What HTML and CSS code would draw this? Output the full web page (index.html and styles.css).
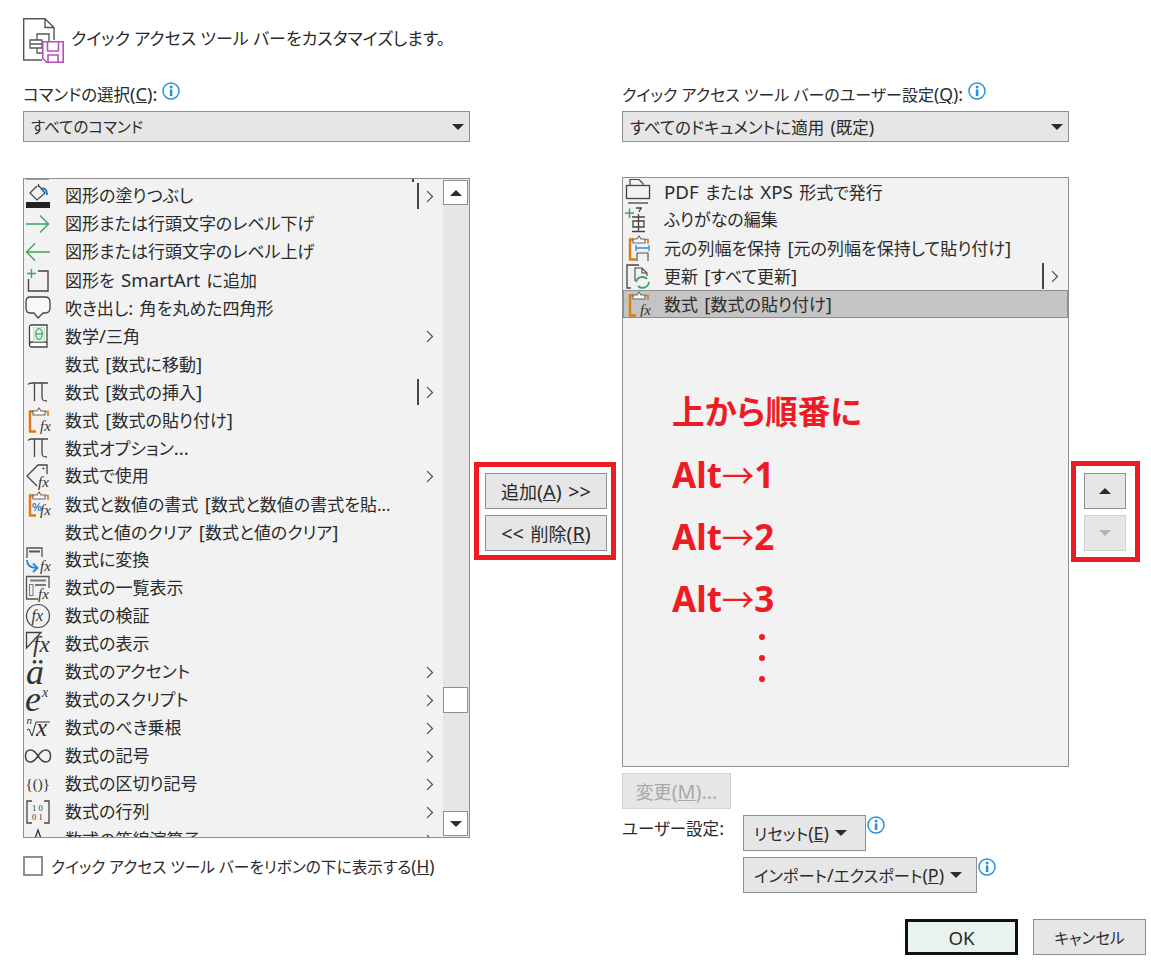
FILE: index.html
```html
<!DOCTYPE html>
<html lang="ja">
<head>
<meta charset="utf-8">
<title>クイック アクセス ツール バー</title>
<link rel="stylesheet" href="styles.css">
</head>
<body>
<svg class="defs" width="0" height="0" aria-hidden="true">
  <symbol id="pi" viewBox="0 0 28 28">
    <path d="M4 6.500C5 5 6 5 8 5H24M10.500 5V23M18 5V19C18 22 19 23 23 23" fill="none" stroke="#444" stroke-width="1.300"/>
  </symbol>
  <symbol id="info" viewBox="0 0 18 18">
    <circle cx="9" cy="9" r="8" fill="#fff" stroke="#2a92d8" stroke-width="1.500"/>
    <rect x="7.800" y="7.500" width="2.600" height="6.500" fill="#2a92d8"/>
    <circle cx="9.100" cy="5" r="1.500" fill="#2a92d8"/>
  </symbol>
  <symbol id="clip" viewBox="0 0 28 28">
    <path d="M10 5.500H6V25.500H12" fill="none" stroke="#dd7a14" stroke-width="2.400"/>
    <path d="M21 5.500H24V10" fill="none" stroke="#dd7a14" stroke-width="1.600"/>
    <path d="M9 9V5H13L15 2L17 5H21V9Z" fill="#f8f8f8" stroke="#666" stroke-width="1.100"/>
  </symbol>
</svg>

<div class="page">
  <header class="head">
    <svg class="head-icon" width="42" height="46" viewBox="0 0 42 46">
      <path d="M19 42H.7V.7H22L31 9.500V22M22 .7V9.500H31" fill="none" stroke="#555" stroke-width="1.400"/>
      <path d="M14 22V16H26V23M7 22H19V30H7ZM14 30V35H19M7 26H19" fill="none" stroke="#555" stroke-width="1.300"/>
      <path d="M19.800 23.800H40.200V44.200H23.500L19.800 40.500Z" fill="#fff" stroke="#b94db9" stroke-width="1.600"/>
      <path d="M24.500 24V33H35.500V24M25 44V37H35V44" fill="none" stroke="#b94db9" stroke-width="1.600"/>
    </svg>
    <h1 class="title">クイック アクセス ツール バーをカスタマイズします。</h1>
  </header>

  <main class="columns">
    <section class="col">
      <div class="label"><span>コマンドの選択<span class="lt">(<u>C</u>):</span></span><svg class="info"><use href="#info"/></svg></div>
      <div class="select select-left"><span>すべてのコマンド</span><i class="tri-down"></i></div>
      <div class="list list-left">
        <div class="rows">
          <div class="row-cut"><i class="cut-bar"></i><i class="sep"></i></div>
          <div class="row"><svg class="ic" viewBox="0 0 28 28"><rect x="2" y="20" width="24" height="6" fill="#222"/><path d="M14.500 2V5M13 4L6 11L13 18L21 11L15 4" fill="none" stroke="#444" stroke-width="1.200"/><path d="M18 6.500C21 6 23 8 23 13" fill="none" stroke="#1e78c8" stroke-width="2"/></svg><span class="t">図形の塗りつぶし</span><i class="sep"></i><i class="chev"></i></div>
          <div class="row"><svg class="ic" viewBox="0 0 28 28"><path d="M2 14H24M16 5.500L24.500 14L16 22.500" fill="none" stroke="#3fa35f" stroke-width="1.400"/></svg><span class="t">図形または行頭文字のレベル下げ</span></div>
          <div class="row"><svg class="ic" viewBox="0 0 28 28"><path d="M26 14H3M11 5.500L2.500 14L11 22.500" fill="none" stroke="#3fa35f" stroke-width="1.400"/></svg><span class="t">図形または行頭文字のレベル上げ</span></div>
          <div class="row"><svg class="ic" viewBox="0 0 28 28"><path d="M3 7.500H12M7.500 3V12" stroke="#3fa35f" stroke-width="1.400" fill="none"/><path d="M14 5H24V25H4.500V13" fill="none" stroke="#444" stroke-width="1.400"/></svg><span class="t">図形を<span class="lt"> SmartArt </span>に追加</span></div>
          <div class="row"><svg class="ic" viewBox="0 0 28 28"><path d="M6 3H21Q26 3 26 8V14Q26 19 21 19H19L14 24L10 19H6Q2 19 2 14V8Q2 3 6 3Z" fill="#f8f8f8" stroke="#444" stroke-width="1.300"/></svg><span class="t">吹き出し<span class="lt">: </span>角を丸めた四角形</span></div>
          <div class="row"><svg class="ic" viewBox="0 0 28 28"><path d="M5.500 22V5Q5.500 3 7 3H23V25H8Q5.500 25 5.500 22.500T8 20H23" fill="#fff" stroke="#444" stroke-width="1.300"/><rect x="9.500" y="5.500" width="11" height="14" fill="#dff0e3" stroke="#a9d4b5" stroke-width=".6"/><ellipse cx="15" cy="12" rx="3.300" ry="5.300" fill="none" stroke="#3fa35f" stroke-width="1.200"/><path d="M12 12H18" stroke="#3fa35f" stroke-width="1.200"/></svg><span class="t">数学<span class="lt">/</span>三角</span><i class="chev"></i></div>
          <div class="row"><span class="ic"></span><span class="t">数式<span class="lt"> [</span>数式に移動<span class="lt">]</span></span></div>
          <div class="row"><svg class="ic"><use href="#pi"/></svg><span class="t">数式<span class="lt"> [</span>数式の挿入<span class="lt">]</span></span><i class="sep"></i><i class="chev"></i></div>
          <div class="row"><svg class="ic" viewBox="0 0 28 28"><use href="#clip" width="28" height="28"/><text x="16" y="25" class="fx">fx</text></svg><span class="t">数式<span class="lt"> [</span>数式の貼り付け<span class="lt">]</span></span></div>
          <div class="row"><svg class="ic"><use href="#pi"/></svg><span class="t">数式オプション<span class="lt">...</span></span></div>
          <div class="row"><svg class="ic" viewBox="0 0 28 28"><path d="M13 24L3 14L14 3H23V12" fill="none" stroke="#444" stroke-width="1.300"/><circle cx="19.500" cy="6.500" r="1" fill="#444"/><text x="14" y="25" class="fx">fx</text></svg><span class="t">数式で使用</span><i class="chev"></i></div>
          <div class="row"><svg class="ic" viewBox="0 0 28 28"><use href="#clip" width="28" height="28"/><text x="8" y="21" class="pct">%</text><text x="16" y="25" class="fx">fx</text></svg><span class="t">数式と数値の書式<span class="lt"> [</span>数式と数値の書式を貼…</span></div>
          <div class="row"><span class="ic"></span><span class="t">数式と値のクリア<span class="lt"> [</span>数式と値のクリア<span class="lt">]</span></span></div>
          <div class="row"><svg class="ic" viewBox="0 0 28 28"><path d="M3 12V2H18V11" fill="none" stroke="#555" stroke-width="1.300"/><path d="M5 5.500H16" stroke="#555" stroke-width="2"/><path d="M3 14C3 20 8 22 13 22M9 17.500L13.500 22L9 26" fill="none" stroke="#1e88d8" stroke-width="1.800"/><text x="16" y="25" class="fx">fx</text></svg><span class="t">数式に変換</span></div>
          <div class="row"><svg class="ic" viewBox="0 0 28 28"><path d="M14 25H2.500V2.500H25V14" fill="none" stroke="#555" stroke-width="1.300"/><path d="M6 6.500H22M11 11H22" stroke="#777" stroke-width="2"/><rect x="5.500" y="10.500" width="3.500" height="11" fill="none" stroke="#777"/><text x="14" y="25" class="fx">fx</text></svg><span class="t">数式の一覧表示</span></div>
          <div class="row"><svg class="ic" viewBox="0 0 28 28"><circle cx="14" cy="14" r="11.500" fill="none" stroke="#444" stroke-width="1.200"/><text x="7.500" y="19" class="fx fx-lg">fx</text></svg><span class="t">数式の検証</span></div>
          <div class="row"><svg class="ic" viewBox="0 0 28 28"><path d="M2.500 18V2.500H17ZM2.500 18L17 2.500" fill="none" stroke="#444" stroke-width="1.300"/><text x="9" y="22" class="fx fx-xl">fx</text></svg><span class="t">数式の表示</span></div>
          <div class="row"><svg class="ic" viewBox="0 0 28 28"><text x="2" y="26" class="math m-a">ä</text></svg><span class="t">数式のアクセント</span><i class="chev"></i></div>
          <div class="row"><svg class="ic" viewBox="0 0 28 28"><text x="1" y="25" class="math m-e">e</text><text x="18" y="11" class="math m-sup">x</text></svg><span class="t">数式のスクリプト</span><i class="chev"></i></div>
          <div class="row"><svg class="ic" viewBox="0 0 28 28"><text x="2.500" y="10" class="math m-n">n</text><path d="M3 16L5 15L8 22L12 8H26" fill="none" stroke="#333" stroke-width="1"/><text x="12" y="22" class="math m-x">x</text></svg><span class="t">数式のべき乗根</span><i class="chev"></i></div>
          <div class="row"><svg class="ic" viewBox="0 0 28 28"><path d="M14 14C11 9 8 8 6.500 8C3 8 1.500 11 1.500 14C1.500 17 3 20 6.500 20C10 20 12 17 14 14C16 11 18 8 21.500 8C25 8 26.500 11 26.500 14C26.500 17 25 20 21.500 20C18 20 16 17 14 14Z" fill="none" stroke="#444" stroke-width="1.500"/></svg><span class="t">数式の記号</span><i class="chev"></i></div>
          <div class="row"><svg class="ic" viewBox="0 0 28 28"><text x="1.500" y="19" class="math m-br">{()}</text></svg><span class="t">数式の区切り記号</span><i class="chev"></i></div>
          <div class="row"><svg class="ic" viewBox="0 0 28 28"><path d="M8 3H3V25H8M20 3H25V25H20" fill="none" stroke="#444" stroke-width="1.300"/><text x="8" y="12.500" class="math m-mx">1 0</text><text x="8" y="21.500" class="math m-mx">0 1</text></svg><span class="t">数式の行列</span><i class="chev"></i></div>
          <div class="row"><svg class="ic" viewBox="0 0 28 28"><path d="M7 24L14 4L21 24" fill="none" stroke="#333" stroke-width="1.300"/></svg><span class="t">数式の等線演算子</span><i class="chev"></i></div>
        </div>
        <div class="scroll">
          <div class="sbtn"><i class="tri-up"></i></div>
          <div class="thumb"></div>
          <div class="sbtn sbtn-end"><i class="tri-down tri-dark"></i></div>
        </div>
      </div>
      <div class="check"><i class="box"></i><span>クイック アクセス ツール バーをリボンの下に表示する<span class="lt">(<u>H</u>)</span></span></div>
    </section>

    <section class="mid">
      <div class="frame frame-mid">
        <div class="btn btn-wide"><span>追加<span class="lt">(<u>A</u>) &gt;&gt;</span></span></div>
        <div class="btn btn-wide"><span><span class="lt">&lt;&lt; </span>削除<span class="lt">(<u>R</u>)</span></span></div>
      </div>
    </section>

    <section class="col col-right">
      <div class="label label-right"><span>クイック アクセス ツール バーのユーザー設定<span class="lt">(<u>Q</u>):</span></span><svg class="info"><use href="#info"/></svg></div>
      <div class="select"><span>すべてのドキュメントに適用<span class="lt"> (</span>既定<span class="lt">)</span></span><i class="tri-down"></i></div>
      <div class="list list-right">
        <div class="row row-r"><svg class="ic" viewBox="0 0 28 28"><path d="M6 7V1.500H15L19 5.500V7" fill="none" stroke="#444" stroke-width="1.200"/><rect x="2.500" y="7.500" width="23" height="13" fill="none" stroke="#444" stroke-width="1.300"/><path d="M4 25H24" stroke="#444" stroke-width="1.300"/></svg><span class="t"><span class="lt">PDF </span>または<span class="lt"> XPS </span>形式で発行</span></div>
        <div class="row row-r"><svg class="ic" viewBox="0 0 28 28"><path d="M1 7H10M5.500 2.500V12" stroke="#3fa35f" stroke-width="1.500" fill="none"/><path d="M12 2H18M17 2L15 6M8 11H21M14.500 8V26M9 15H20V21H9ZM8 25.500H21" fill="none" stroke="#444" stroke-width="1.300"/></svg><span class="t">ふりがなの編集</span></div>
        <div class="row row-r"><svg class="ic" viewBox="0 0 28 28"><use href="#clip" width="28" height="28"/><path d="M12 11V17M25 11V17M12 14H25" stroke="#2a92d8" stroke-width="1.300" fill="none"/><path d="M13 19H24V27M13 19V27" stroke="#555" stroke-width="1.200" fill="none"/></svg><span class="t">元の列幅を保持<span class="lt"> [</span>元の列幅を保持して貼り付け<span class="lt">]</span></span></div>
        <div class="row row-r"><svg class="ic" viewBox="0 0 28 28"><path d="M7 26H3V3H15" fill="none" stroke="#444" stroke-width="1.300"/><path d="M11 19V6H18L23 11V14M18 6V11H23" fill="none" stroke="#444" stroke-width="1.100"/><path d="M12 20A6.500 6.500 0 0 1 23 17M25 20A6.500 6.500 0 0 1 14 24" fill="none" stroke="#3fa35f" stroke-width="1.800"/></svg><span class="t">更新<span class="lt"> [</span>すべて更新<span class="lt">]</span></span><i class="sep"></i><i class="chev"></i></div>
        <div class="row row-r row-sel"><svg class="ic" viewBox="0 0 28 28"><use href="#clip" width="28" height="28"/><text x="16" y="25" class="fx">fx</text></svg><span class="t">数式<span class="lt"> [</span>数式の貼り付け<span class="lt">]</span></span></div>
        <div class="note">
          <p class="note-line">上から順番に</p>
          <p class="note-line"><span class="note-lt">Alt</span><span class="note-ar">→</span><span class="note-lt">1</span></p>
          <p class="note-line"><span class="note-lt">Alt</span><span class="note-ar">→</span><span class="note-lt">2</span></p>
          <p class="note-line"><span class="note-lt">Alt</span><span class="note-ar">→</span><span class="note-lt">3</span></p>
          <div class="dots"><i></i><i></i><i></i></div>
        </div>
      </div>
      <div class="btn btn-change btn-off"><span>変更<span class="lt">(<u>M</u>)...</span></span></div>
      <div class="custom">
        <div class="custom-label">ユーザー設定<span class="lt">:</span></div>
        <div class="custom-btns">
          <div class="custom-line"><div class="btn btn-menu btn-reset"><span>リセット<span class="lt">(<u>E</u>)</span></span><i class="tri-down tri-dark"></i></div><svg class="info info-b"><use href="#info"/></svg></div>
          <div class="custom-line"><div class="btn btn-menu btn-import"><span>インポート<span class="lt">/</span>エクスポート<span class="lt">(<u>P</u>)</span></span><i class="tri-down tri-dark"></i></div><svg class="info info-b"><use href="#info"/></svg></div>
        </div>
      </div>
    </section>

    <section class="mid">
      <div class="frame frame-side">
        <div class="btn btn-arrow btn-up"><i class="tri-up"></i></div>
        <div class="btn btn-arrow btn-off"><i class="tri-down tri-off"></i></div>
      </div>
    </section>
  </main>

  <footer class="foot">
    <div class="btn btn-foot btn-ok"><span class="lt">OK</span></div>
    <div class="btn btn-foot">キャンセル</div>
  </footer>
</div>
</body>
</html>
```
FILE: styles.css
```css
* { box-sizing: border-box; }
html, body { margin: 0; padding: 0; background: #fff; overflow: hidden; }
body {
  width: 1151px;
  height: 967px;
  font-family: "Noto Sans", "Noto Sans CJK JP", sans-serif;
  font-size: 17px;
  font-feature-settings: "palt";
  color: #2b2b2b;
}
.lt { font-size: 1.100em; word-spacing: 1.500px; }
.defs { position: absolute; }
.page { padding: 18px 5px 0 23px; }

.head { display: flex; align-items: flex-start; height: 62px; }
.head-icon { flex: none; display: block; }
.title { margin: 8px 0 0 6px; font-size: 17px; font-weight: 400; line-height: 26px; white-space: nowrap; }

.columns { display: flex; align-items: flex-start; height: 839px; }
.col { width: 447px; flex: none; }
.col-right { margin-left: 6px; }
.mid { flex: none; margin-top: 382px; }

.label { display: flex; align-items: flex-start; height: 31px; font-size: 16.500px; line-height: 28px; white-space: nowrap; }
.label-right { font-size: 16px; }
.info { width: 18px; height: 18px; flex: none; margin: 2px 0 0 5px; }

.select {
  display: flex; align-items: center; justify-content: space-between;
  height: 31px; padding: 0 5px 0 7px; font-size: 16.500px;
  background: #e6e6e6; border: 1px solid #8f8f8f;
}
.select-left { font-size: 15.500px; }

.list { position: relative; background: #f2f2f2; border: 1px solid #8f8f8f; overflow: hidden; }
.list-left { display: flex; height: 660px; margin-top: 36px; }
.list-right { height: 590px; margin-top: 35px; }
.rows { flex: none; width: 419px; }
.row-cut { display: flex; justify-content: flex-end; position: relative; height: 3px; overflow: hidden; padding-right: 24px; }
.cut-bar { position: absolute; left: 2px; top: 0; width: 23px; height: 1px; background: #999; }
.row { display: flex; align-items: center; height: 28px; padding-right: 9px; white-space: nowrap; }
.ic { display: block; flex: none; width: 28px; height: 28px; margin-right: 13px; overflow: visible; }
.t { flex: 1; line-height: 28px; }
.sep { flex: none; display: block; width: 2px; height: 26px; margin-right: 5px; background: #444; }
.chev { flex: none; display: block; width: 7px; height: 7px; margin: 0 3px 0 0; border: solid #444; border-width: 1.500px 1.500px 0 0; transform: rotate(45deg) scale(1.150); }

.row-r { padding-right: 9px; }
.row-r .ic { margin-left: 1px; margin-right: 12px; }
.row-sel { background: #c4c4c4; outline: 1px solid #8f8f8f; outline-offset: -1px; }

.scroll { flex: none; display: flex; flex-direction: column; width: 26px; padding-top: 1px; background: #e6e6e6; height: 100%; }
.sbtn { display: flex; align-items: center; justify-content: center; flex: none; width: 25px; height: 25px; background: #fff; border: 1px solid #8f8f8f; }
.sbtn-end { margin-top: auto; margin-bottom: 1px; }
.thumb { flex: none; width: 25px; height: 26px; margin-top: 482px; background: #fff; border: 1px solid #8f8f8f; }

.tri-down, .tri-up { display: block; flex: none; width: 0; height: 0; border-left: 6px solid transparent; border-right: 6px solid transparent; }
.tri-down { border-top: 6px solid #2b2b2b; }
.tri-up { border-bottom: 6px solid #2b2b2b; }
.tri-off { border-top-color: #b5b5b5; }

.fx { font-family: "Liberation Serif", serif; font-style: italic; font-size: 15px; fill: #333; font-feature-settings: normal; }
.fx-lg { font-size: 16px; }
.fx-xl { font-size: 23px; }
.pct { font-family: "Liberation Sans", sans-serif; font-weight: 700; font-size: 11px; fill: #2a80c8; }
.math { font-family: "Liberation Serif", serif; fill: #333; }
.m-a { font-style: italic; font-size: 36px; }
.m-e { font-style: italic; font-size: 36px; }
.m-sup { font-style: italic; font-size: 14px; }
.m-n { font-style: italic; font-size: 11px; }
.m-x { font-style: italic; font-size: 25px; }
.m-br { font-size: 15px; }
.m-mx { font-size: 8.500px; }

.check { display: flex; align-items: center; height: 22px; margin-top: 17px; font-size: 15.700px; white-space: nowrap; }
.box { display: block; flex: none; width: 20px; height: 20px; margin-right: 8px; background: #fff; border: 2px solid #8f8f8f; }

.btn { display: flex; align-items: center; justify-content: center; height: 36px; background: #e6e6e6; border: 1px solid #8f8f8f; white-space: nowrap; }
.btn-off { background: #e6e6e6; border-color: #d2d2d2; color: #a9a9a9; }
.btn-menu { justify-content: flex-start; padding-left: 10px; gap: 6px; font-size: 16.300px; }

.frame { border: 5px solid #ed1c24; display: flex; flex-direction: column; gap: 6px; }
.frame-mid { width: 142px; height: 98px; margin-left: 4px; padding: 6px 4px 4px 6px; }
.btn-wide { width: 122px; font-size: 18px; }
.frame-side { width: 69px; height: 101px; margin: -1px 0 0 2px; padding: 7px 9px 0 8px; }
.btn-arrow { width: 42px; }
.btn-up { border-width: 1.500px; }

.btn-change { width: 109px; margin-top: 6px; font-size: 18px; }
.custom { display: flex; margin-top: 6px; }
.custom-label { width: 121px; font-size: 16.500px; line-height: 26px; }
.custom-btns { display: flex; flex-direction: column; gap: 6px; }
.custom-line { display: flex; align-items: flex-start; }
.info-b { margin: 1px 0 0 1px; }
.btn-reset { width: 123px; }
.btn-import { width: 234px; }

.note { position: absolute; left: 49px; top: 211px; color: #ed1c24; }
.note-line { display: flex; align-items: baseline; height: 46px; margin: 0 0 16px; font-size: 32.500px; line-height: 46px; font-weight: 700; white-space: nowrap; }
.note-lt { font-size: 35px; }
.note-ar { font-family: "Noto Sans CJK JP", sans-serif; font-weight: 400; font-feature-settings: normal; }
.dots { display: flex; flex-direction: column; gap: 15px; margin: -3px 0 0 87px; }
.dots i { display: block; width: 6px; height: 6px; border-radius: 50%; background: #ed1c24; }

.foot { display: flex; justify-content: flex-end; gap: 15px; margin-top: 0; font-size: 15.500px; }
.btn-foot { width: 113px; }
.btn-ok { background: #e9f3ee; border: 3px solid #111; font-size: 17px; }
```
